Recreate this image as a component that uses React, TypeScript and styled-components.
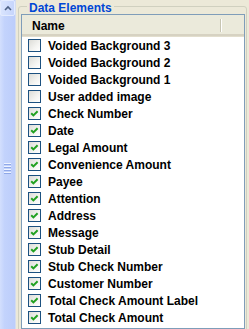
import styled, { createGlobalStyle } from "styled-components";

const GlobalStyle = createGlobalStyle`
  html, body {
    margin: 0;
    padding: 0;
    background: #ece9d8;
    overflow: hidden;
  }
  body {
    font-family: "Liberation Sans", Arial, sans-serif;
  }
`;

const Page = styled.div`
  display: flex;
  width: 249px;
  height: 329px;
  overflow: hidden;
  background: #ece9d8;
`;

const ScrollBar = styled.div`
  width: 15px;
  flex-shrink: 0;
  display: flex;
  flex-direction: column;
  align-items: center;
  background: linear-gradient(to right, #d3dffd 0%, #c3d3fc 30%, #bccdfb 100%);
  border-right: 1px solid #d4dcef;
`;

const ArrowButton = styled.div`
  width: 15px;
  height: 16px;
  box-sizing: border-box;
  border: 1px solid #e3ebfe;
  border-radius: 2px;
  background: linear-gradient(to right, #d9e4fe, #c6d5fc);
  display: flex;
  align-items: center;
  justify-content: center;
`;

const Grip = styled.div`
  margin-top: 147px;
  display: flex;
  flex-direction: column;
  gap: 1px;
  span {
    display: block;
    width: 7px;
    height: 1px;
    background: #eef3ff;
    border-bottom: 1px solid #8fa8e8;
  }
`;

const GroupBox = styled.fieldset`
  margin: 1px 2px 0 2px;
  padding: 3px 1px 0 2px;
  border: 1px solid #d0d0bf;
  border-radius: 3px;
  flex: 1;
  min-width: 0;
  height: 340px;
  box-sizing: border-box;
`;

const Legend = styled.legend`
  margin-left: 6px;
  padding: 0 2px;
  height: 10px;
  line-height: 14px;
  font-size: 12px;
  font-weight: bold;
  color: #0046d5;
`;

const ListBox = styled.div`
  border: 1px solid #7f9db9;
  background: #fff;
  height: 315px;
  box-sizing: border-box;
  overflow: hidden;
`;

const Header = styled.div`
  height: 22px;
  display: flex;
  align-items: center;
  background: #ebeadb;
  border-bottom: 1px solid #e2decd;
  box-shadow: inset 0 -2px 0 #d6d2c2, inset 0 -1px 0 #cbc7b8;
  box-sizing: border-box;
  padding-left: 10px;
`;

const HeaderLabel = styled.span`
  font-size: 12px;
  font-weight: bold;
  color: #000;
  flex: 1;
`;

const ColumnDivider = styled.span`
  width: 1px;
  height: 13px;
  margin-right: 22px;
  margin-bottom: 1px;
  background: #c7c5b2;
  border-right: 1px solid #fff;
`;

const Row = styled.div`
  height: 17px;
  display: flex;
  align-items: center;
  padding-left: 6px;
  gap: 7px;
  font-size: 12px;
  font-weight: bold;
  color: #000;
  white-space: nowrap;
`;

const Box = styled.span`
  width: 13px;
  height: 13px;
  box-sizing: border-box;
  border: 1px solid #1c5180;
  background: linear-gradient(135deg, #dcdcd7 0%, #f4f4f1 60%, #ffffff 100%);
  display: flex;
  align-items: center;
  justify-content: center;
  flex-shrink: 0;
`;

type Item = { label: string; checked: boolean };

const items: Item[] = [
  { label: "Voided Background 3", checked: false },
  { label: "Voided Background 2", checked: false },
  { label: "Voided Background 1", checked: false },
  { label: "User added image", checked: false },
  { label: "Check Number", checked: true },
  { label: "Date", checked: true },
  { label: "Legal Amount", checked: true },
  { label: "Convenience Amount", checked: true },
  { label: "Payee", checked: true },
  { label: "Attention", checked: true },
  { label: "Address", checked: true },
  { label: "Message", checked: true },
  { label: "Stub Detail", checked: true },
  { label: "Stub Check Number", checked: true },
  { label: "Customer Number", checked: true },
  { label: "Total Check Amount Label", checked: true },
  { label: "Total Check Amount", checked: true },
];

function CheckBox({ checked }: { checked: boolean }) {
  return (
    <Box>
      {checked && (
        <svg width="11" height="11" viewBox="0 0 11 11">
          <path d="M2.2 5.2 L4.4 7.4 L8.6 3.2" fill="none" stroke="#21a121" strokeWidth="2" />
        </svg>
      )}
    </Box>
  );
}

function App() {
  return (
    <Page>
      <GlobalStyle />
      <ScrollBar>
        <ArrowButton>
          <svg width="8" height="6" viewBox="0 0 8 6">
            <path d="M1 5 L4 2 L7 5" fill="none" stroke="#4d6185" strokeWidth="1.6" />
          </svg>
        </ArrowButton>
        <Grip>
          <span />
          <span />
          <span />
          <span />
        </Grip>
      </ScrollBar>
      <GroupBox>
        <Legend>Data Elements</Legend>
        <ListBox>
          <Header>
            <HeaderLabel>Name</HeaderLabel>
            <ColumnDivider />
          </Header>
          {items.map((it) => (
            <Row key={it.label}>
              <CheckBox checked={it.checked} />
              {it.label}
            </Row>
          ))}
        </ListBox>
      </GroupBox>
    </Page>
  );
}

export default App;
